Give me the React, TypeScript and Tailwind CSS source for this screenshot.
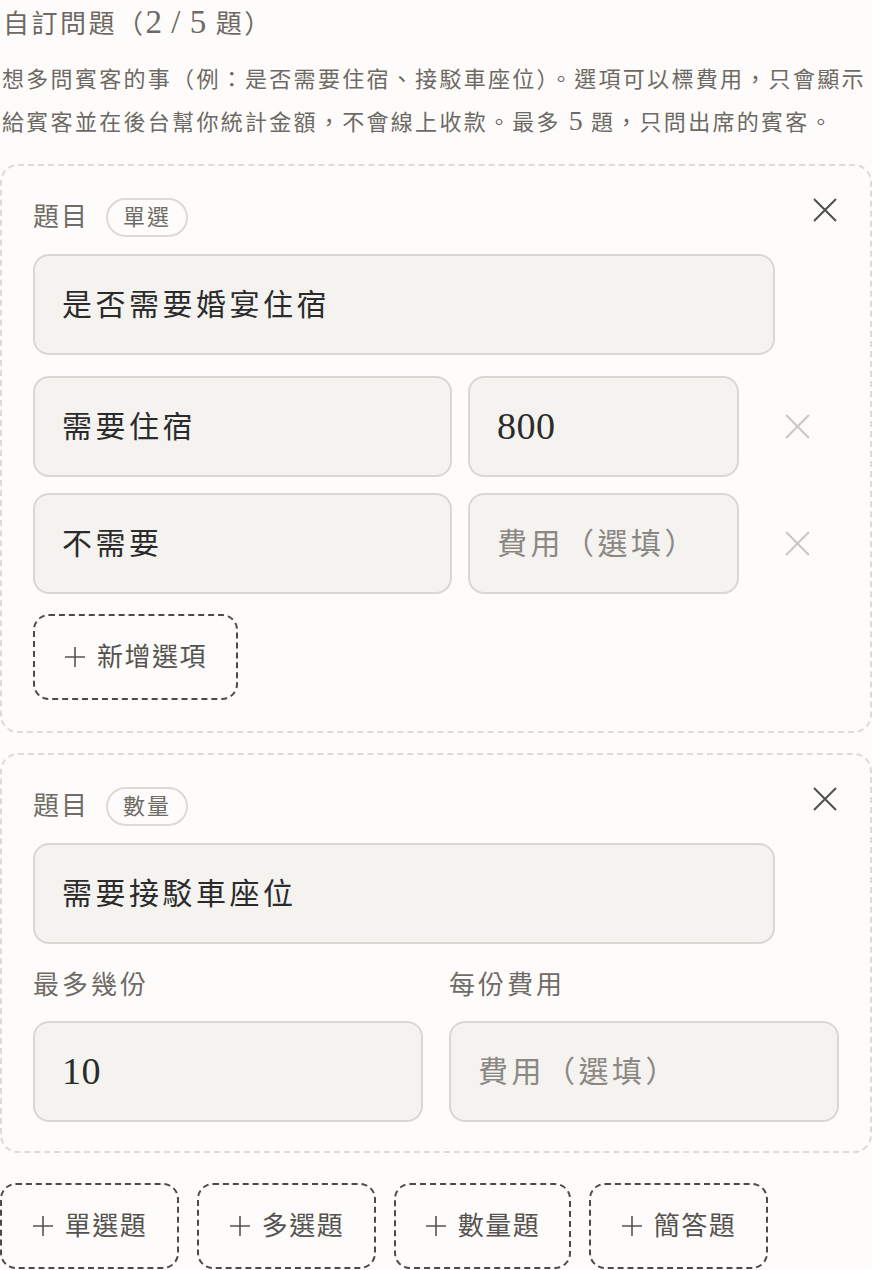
import React from 'react';

const FONT = { fontFamily: '"Liberation Serif", "Noto Sans CJK TC", serif' };

// latin digits in the reference font sit larger than the CJK glyphs
const Num: React.FC<{ children: React.ReactNode }> = ({ children }) => (
  <span className="text-[1.27em] leading-none tracking-[0.5px]">{children}</span>
);

const CloseIcon: React.FC<{ className?: string; size?: number }> = ({ className, size = 26 }) => (
  <svg width={size} height={size} viewBox="0 0 26 26" className={className} fill="none">
    <path d="M2 2 L24 24 M24 2 L2 24" stroke="currentColor" strokeWidth="2" />
  </svg>
);

const PlusIcon = () => (
  <svg width="22" height="22" viewBox="0 0 22 22" fill="none" className="mr-[11px] shrink-0">
    <path d="M11 1 V21 M1 11 H21" stroke="currentColor" strokeWidth="1.6" />
  </svg>
);

const inputBox =
  'flex h-[101px] items-center rounded-[16px] border-2 border-[#d9d7d2] bg-[#f4f3f0] px-[27px] text-[30px] tracking-[3.5px]';

const CardHeader: React.FC<{ kind: string }> = ({ kind }) => (
  <div className="flex items-start justify-between">
    <div className="flex h-[40px] items-center gap-[17px]">
      <span className="text-[26px] tracking-[2px] text-[#6f6b66]">題目</span>
      <span className="flex h-[39px] items-center rounded-full border-2 border-[#dddad5] px-[15px] text-[22px] tracking-[2px] text-[#6f6b66]">
        {kind}
      </span>
    </div>
    <button className="mr-[1px] text-[#4f4f4f]">
      <CloseIcon />
    </button>
  </div>
);

const OptionRow: React.FC<{ name: string; fee?: string }> = ({ name, fee }) => (
  <div className="flex gap-4">
    <div className={`${inputBox} flex-1 text-[#2b2b2b]`}>{name}</div>
    <div className={`${inputBox} w-[271px] ${fee ? 'text-[#2b2b2b]' : 'text-[#8b8884]'}`}>
      {fee ? <Num>{fee}</Num> : '費用（選填）'}
    </div>
    <div className="flex w-[84px] items-center justify-center text-[#c9c8c6]">
      <CloseIcon size={27} />
    </div>
  </div>
);

const DashedButton: React.FC<{ label: string; className?: string }> = ({ label, className }) => (
  <button
    className={`flex h-[86px] items-center justify-center rounded-[16px] border-2 border-dashed border-[#4a4a48] text-[26px] tracking-[1.5px] text-[#555350] ${className ?? ''}`}
  >
    <PlusIcon />
    {label}
  </button>
);

export default function App() {
  return (
    <div className="min-h-[1270px] w-[872px] bg-[#fdfcfa]" style={FONT}>
      <h1 className="h-[50px] pl-[3px] text-[26px] leading-[50px] tracking-[2.5px] text-[#6d6964]">
        自訂問題（<Num>2 / 5</Num> 題）
      </h1>
      <p className="mt-[8px] text-[22px] leading-[43px] tracking-[2.3px] text-[#6d6964]">
        <span className="block whitespace-nowrap pl-[2px]">
          想多問賓客的事（例：是否需要住宿、接駁車座位）。選項可以標費用，只會顯示
        </span>
        <span className="block whitespace-nowrap pl-[2px]">
          給賓客並在後台幫你統計金額，不會線上收款。最多 <Num>5</Num> 題，只問出席的賓客。
        </span>
      </p>

      <div className="mt-[20px] flex flex-col gap-[20px]">
        <section className="rounded-[18px] border-2 border-dashed border-[#dedbd6] p-[31px]">
          <CardHeader kind="單選" />
          <div className={`${inputBox} mt-[17px] mr-[64px] text-[#2b2b2b]`}>是否需要婚宴住宿</div>
          <div className="mt-[21px] flex flex-col gap-4">
            <OptionRow name="需要住宿" fee="800" />
            <OptionRow name="不需要" />
          </div>
          <DashedButton label="新增選項" className="mt-[20px] w-[205px]" />
        </section>

        <section className="rounded-[18px] border-2 border-dashed border-[#dedbd6] px-[31px] pt-[31px] pb-[29px]">
          <CardHeader kind="數量" />
          <div className={`${inputBox} mt-[17px] mr-[64px] text-[#2b2b2b]`}>需要接駁車座位</div>
          <div className="mt-[26px] grid grid-cols-2 gap-x-[26px]">
            <div className="flex flex-col gap-[19px]">
              <span className="text-[26px] leading-[32px] tracking-[3px] text-[#6f6b66]">最多幾份</span>
              <div className={`${inputBox} text-[#2b2b2b]`}>
                <Num>10</Num>
              </div>
            </div>
            <div className="flex flex-col gap-[19px]">
              <span className="text-[26px] leading-[32px] tracking-[3px] text-[#6f6b66]">每份費用</span>
              <div className={`${inputBox} text-[#8b8884]`}>費用（選填）</div>
            </div>
          </div>
        </section>
      </div>

      <div className="mt-[30px] flex gap-[18px]">
        <DashedButton label="單選題" className="w-[179px]" />
        <DashedButton label="多選題" className="w-[179px]" />
        <DashedButton label="數量題" className="w-[177px]" />
        <DashedButton label="簡答題" className="w-[179px]" />
      </div>
    </div>
  );
}
